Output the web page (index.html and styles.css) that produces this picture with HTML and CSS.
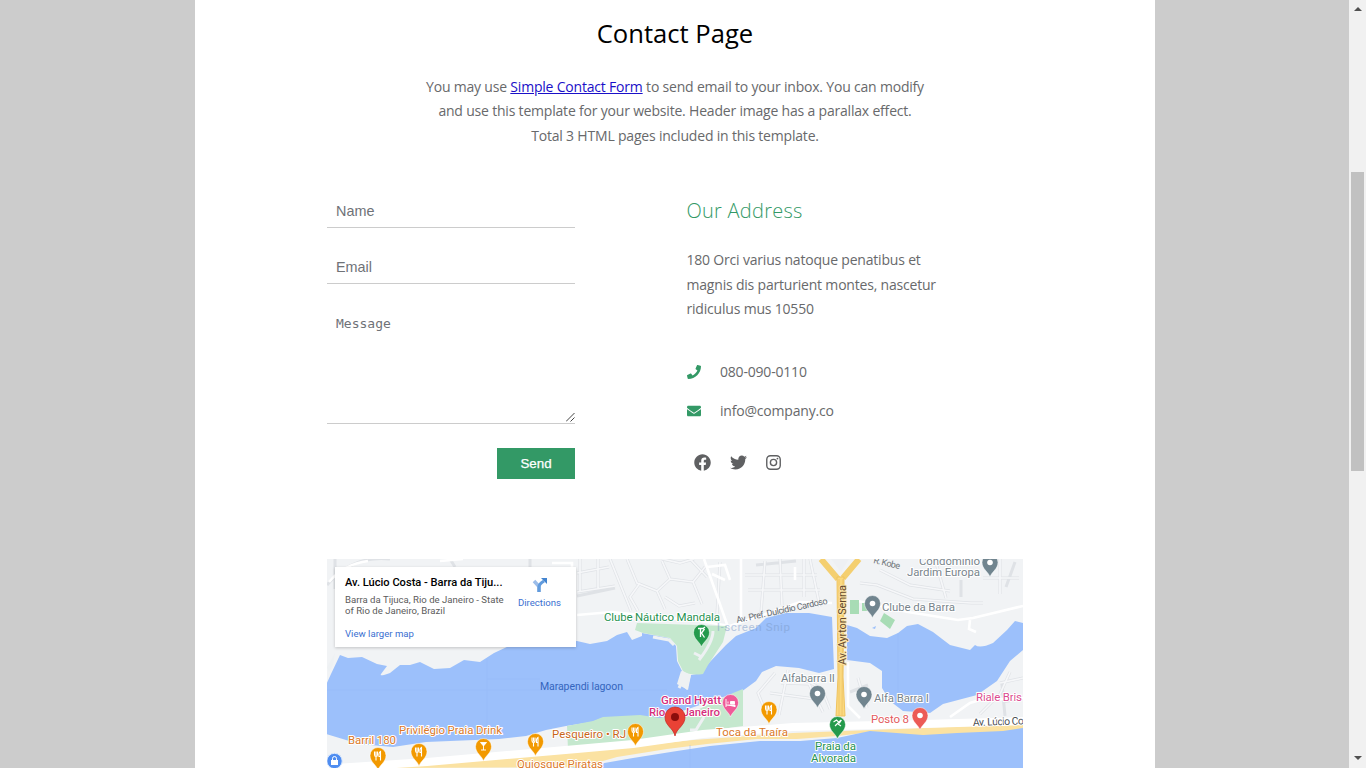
FILE: index.html
```html
<!DOCTYPE html>
<html lang="en">
<head>
<meta charset="utf-8">
<title>Contact Page</title>
<link rel="stylesheet" href="styles.css">
</head>
<body>
<div class="viewport">
<div class="canvas">
<main class="page">
  <header class="intro">
    <h1>Contact Page</h1>
    <p>You may use <a href="#">Simple Contact Form</a> to send email to your inbox. You can modify<br>and use this template for your website. Header image has a parallax effect.<br>Total 3 HTML pages included in this template.</p>
  </header>
  <div class="columns">
    <form class="form">
      <input type="text" placeholder="Name">
      <input type="email" placeholder="Email">
      <div class="message">
        <textarea placeholder="Message"></textarea>
        <svg class="grip" width="9" height="9" viewBox="0 0 9 9"><path d="M0 8.5 8.5 0M4.5 8.5l4-4" stroke="#444" fill="none"/></svg>
      </div>
      <button type="button">Send</button>
    </form>
    <section class="address">
      <h2>Our Address</h2>
      <p>180 Orci varius natoque penatibus et<br>magnis dis parturient montes, nascetur<br>ridiculus mus 10550</p>
      <div class="line"><svg width="14" height="14" viewBox="0 0 512 512"><path fill="#339966" d="M493.4 24.6l-104-24c-11.3-2.6-22.9 3.3-27.5 13.9l-48 112c-4.2 9.8-1.4 21.3 6.9 28l60.6 49.6c-36 76.7-98.9 140.5-177.2 177.2l-49.6-60.6c-6.8-8.3-18.2-11.1-28-6.9l-112 48C3.9 366.5-2 378.1.6 389.4l24 104C27.1 504.2 36.7 512 48 512c256.1 0 464-207.500 464-464 0-11.200-7.700-20.900-18.600-23.400z"/></svg><span>080-090-0110</span></div>
      <div class="line"><svg width="14" height="14" viewBox="0 0 512 512"><path fill="#339966" d="M502.300 190.800c3.900-3.100 9.700-.2 9.700 4.700V400c0 26.500-21.500 48-48 48H48c-26.500 0-48-21.500-48-48V195.600c0-5 5.700-7.800 9.700-4.700 22.400 17.400 52.100 39.500 154.100 113.600 21.100 15.400 56.700 47.800 92.200 47.600 35.700.3 72-32.800 92.300-47.600 102-74.100 131.600-96.300 154-113.700zM256 320c23.200.4 56.600-29.200 73.400-41.400 132.700-96.300 142.800-104.700 173.400-128.700 5.800-4.500 9.200-11.500 9.200-18.900v-19c0-26.500-21.500-48-48-48H48c-26.500 0-48 21.500-48 48v19c0 7.400 3.400 14.300 9.200 18.900 30.600 23.900 40.700 32.400 173.400 128.700 16.800 12.200 50.200 41.800 73.400 41.400z"/></svg><span>info@company.co</span></div>
      <div class="social">
        <svg width="17" height="17" viewBox="0 0 512 512"><path d="M504 256C504 119 393 8 256 8S8 119 8 256c0 123.800 90.700 226.400 209.300 245V327.700h-63V256h63v-54.600c0-62.200 37-96.500 93.700-96.500 27.100 0 55.500 4.800 55.500 4.800v61h-31.300c-30.800 0-40.400 19.100-40.400 38.700V256h68.800l-11 71.700h-57.800V501C413.300 482.400 504 379.800 504 256z"/></svg>
        <svg width="17" height="17" viewBox="0 0 512 512"><path d="M459.400 151.700c.3 4.500.3 9.100.3 13.600 0 138.700-105.600 298.600-298.600 298.600-59.500 0-114.700-17.200-161.100-47.100 8.400 1 16.600 1.300 25.300 1.300 49.100 0 94.200-16.600 130.300-44.800-46.100-1-84.800-31.200-98.100-72.800 6.500 1 13 1.600 19.800 1.600 9.400 0 18.800-1.300 27.600-3.600-48.100-9.700-84.100-52-84.100-103v-1.300c14 7.800 30.200 12.700 47.400 13.300-28.300-18.800-46.800-51-46.800-87.400 0-19.500 5.200-37.400 14.300-53 51.700 63.700 129.300 105.300 216.400 109.800-1.600-7.800-2.600-15.900-2.600-24 0-57.800 46.800-104.900 104.900-104.900 30.200 0 57.500 12.700 76.700 33.100 23.700-4.500 46.500-13.300 66.600-25.300-7.800 24.400-24.400 44.800-46.100 57.800 21.100-2.300 41.600-8.100 60.400-16.200-14.300 20.800-32.200 39.300-52.600 54.300z"/></svg>
        <svg width="17" height="17" viewBox="0 0 512 512"><g fill="none" stroke="#5f6062" stroke-width="42"><rect x="53" y="53" width="406" height="406" rx="112"/><circle cx="256" cy="256" r="94"/></g><circle cx="375" cy="137" r="27"/></svg>
      </div>
    </section>
  </div>
  <div class="map">
    <svg class="map-art" width="696" height="209" viewBox="327 559 696 209">
      <defs>
        <path id="pin" d="M0 0C-1.500-5-8-8-8-14.500a8 8 0 0 1 16 0C8-8 1.500-5 0 0z"/>
        <path id="fork" d="M-3.500-18.500v3q0 2 1.500 2v4M-.5-18.500v3q0 2-1.500 2M-2-18.500v4M2.500-9.500v-9q-2 1-1.500 5h1.500" fill="none" stroke="#fff" stroke-width="1.100"/>
      </defs>
      <rect x="327" y="559" width="696" height="209" fill="#f1f3f5"/>
      <g fill="none" stroke="#dfe2e6" stroke-width="3">
        <path d="M610 559l21 52M577 573l32-6M577 592l38-6M580 559v33M598 559v30M615 588l-38 8M627 559l10 24 20 8 13-12-8-18M657 591l8 18M670 579l23 3 9 22M662 559l18 4 14-4M693 582l12-15M640 583l-10 14 8 14M665 597l14 9 16-3M690 559l17 18M720 562l-3 52M765 561l-4 52M780 559l2 46M804 559v38M745 575h72M748 590h72M756 565l40-4M810 559l10 48M860 583l17 2 36 14 58 4h12M880 570l30 15 40 6M935 559l11 39M961 580v17M1000 559v35M983 578h36M1015 562l-9 25M800 677l22 12 8 20M775 673l-17 20 9 22M781 683l28 1 14 28M770 693l45 6M788 670l-9 45M858 678l9 30M850 692l18-7M1010 672l-10 22-20 20M1023 678l-23 5M1005 716l-3-32M1023 698l-20 4M327 585q25-30 63-26M335 559v30M450 559l5 8M530 559v8"/>
      </g>
      <g fill="none" stroke="#f6f7f9" stroke-width="1.700">
        <path d="M610 559l21 52M577 573l32-6M577 592l38-6M580 559v33M598 559v30M627 559l10 24 20 8 13-12-8-18M657 591l8 18M670 579l23 3 9 22M662 559l18 4 14-4M693 582l12-15M640 583l-10 14 8 14M665 597l14 9 16-3M690 559l17 18M720 562l-3 52M765 561l-4 52M780 559l2 46M804 559v38M745 575h72M748 590h72M810 559l10 48M860 583l17 2 36 14 58 4h12M880 570l30 15 40 6M935 559l11 39M1000 559v35M983 578h36M800 677l22 12 8 20M775 673l-17 20 9 22M781 683l28 1 14 28M770 693l45 6M788 670l-9 45M858 678l9 30M1010 672l-10 22-20 20M1023 678l-23 5"/>
      </g>
      <g fill="none" stroke="#fff" stroke-width="2.600">
        <path d="M704 559l24 68M577 615l35-3 88 9 30 5 70-24 32 1M741 559v60M707 567l18-2 5 15M712 574l13 6M858 601l50 11 50 8 15-2 50-12M970 620l-1 9 7 3M795 567v13M848 662v44l12 12M440 561l23-2M552 563h20v8M329 582q15-18 39-21M950 717l20-14 10-3 43-2"/>
      </g>
      <path fill="#9cc0fb" d="M340 655l8 3 14-1 15 7 10 2-6 8q-2 3 9-1l10-8 10 0 10-3 14 7 16-1 14-8 16 2 14-9 15-7 68-5 13 3 17-3 10-6 10-3 5 8 10-4v-3l27 5 7 8 1 15 5 10-3 12 8 7 4-15 11-2 5-8 19-20 10-9 20-8 10-10 20-5h23l23 4 2 52-15 4-20-5-23-2-14 6-6 9-15 11-9 2-73 25-20-3-37 2-10 4-26 4-20 4-20 6-27 3-73 3-33 5-34-3-13-4-20-6v-49l5-11z"/>
      <path fill="#9cc0fb" d="M847 625l10 3 13 8 17 2 11-5 9-7 11-2 15 8 17 13 20 5 5-5q5 4 18-2l14-13 8-9 8 2v27l-13 11-13 20-20 14-34 9-13 9-27-2-13-10-8-13v-17l-12-8-23-3z"/>
      <path fill="#c5e8ce" d="M637 623l90 3-4 16-15 23-5 9q-13 2-20-3l-5-10-1-15-7-8-27-5-8-3zM567 726l26-5 10-4 37-2 20 3 35-7 38-18 10-4v37l-175 24z"/>
      <path d="M653 637l16 3 5 5M679 688l6-12M713 631q0 11-14 29M694 653l8 4M690 730l6 0 8-13" fill="none" stroke="#eef1f3" stroke-width="3"/>
      <path d="M677 684l4-13 10 4-3 15zM327 667l4-7 4-7-2 12-4 7z" fill="#eef1f3"/>
      <g fill="#a8dcb5"><path d="M850 600h9v14h-9zM862 603h8v8h-8zM884 613l11 7-5 9-10-8z"/></g>
      <path d="M872 628l4-2-1 3z" fill="#9cc0fb"/>
      <path fill="#fbe2a2" d="M390 768l37-5 150-12 50-4 66-7 100-7 130-5 100-4v5l-10 4-46 3-44 1-50-5-36 4-40 3h-40l-50 5-40 5-50 8-35 10z"/>
      <path fill="#9cc0fb" d="M570 768l23-3 40-7 44-7 33-5 50-5h40l37-3 33-7 53 4 34-2 46-2 20-3v40z"/>
      <path d="M320 769l107-7 150-13 56-5 70-10 90-7 130-3 100-3" fill="none" stroke="#fff" stroke-width="8"/>
      <path d="M821 559l17 20M859 559l-16 19" fill="none" stroke="#f4cf70" stroke-width="6"/>
      <path d="M837 577h7l-1 100 2 39h-9l2-39z" fill="#fbd97f" stroke="#efc35e"/>
      <path d="M831 559h18l-8 13z" fill="#eef0f3"/><path d="M839 579v137M843 579l-1 137" stroke="#f0c76a" fill="none"/>
      <path d="M487 659v78M487 679h53M690 745v23M898 633v68M327 690h340" stroke="#94b9f4" stroke-width=".5"/>
      <g class="label" font-size="11.500">
        <text x="604" y="621" textLength="116" fill="#259150">Clube Náutico Mandala</text>
        <text x="661" y="704" textLength="60" class="hotel">Grand Hyatt</text>
        <text x="649" y="715.500" textLength="71" class="hotel">Rio de Janeiro</text>
        <text x="919" y="565" textLength="61" fill="#78848b">Condomínio</text>
        <text x="907" y="576" textLength="73" fill="#78848b">Jardim Europa</text>
        <text x="882" y="611" textLength="73" fill="#78848b">Clube da Barra</text>
        <text x="781" y="682" textLength="54" fill="#78848b">Alfabarra II</text>
        <text x="874" y="702" textLength="55" fill="#78848b">Alfa Barra I</text>
        <text x="871" y="723" textLength="38" fill="#e35b5d">Posto 8</text>
        <text x="976" y="701" textLength="46" fill="#dc4c90">Riale Bris</text>
        <text x="716" y="736" textLength="72" fill="#db7929">Toca da Traíra</text>
        <text x="552" y="738" textLength="74" fill="#c9661a">Pesqueiro • RJ</text>
        <text x="517" y="768" textLength="86" fill="#db7929">Quiosque Piratas</text>
        <text x="399" y="734" textLength="103" fill="#db7929">Privilégio Praia Drink</text>
        <text x="348" y="744" textLength="48" fill="#db7929">Barril 180</text>
        <text x="815" y="750" textLength="41" fill="#259150">Praia da</text>
        <text x="811" y="762" textLength="45" fill="#259150">Alvorada</text>
      </g>
      <g class="plain">
        <text x="540" y="690" textLength="83" font-size="10.500" fill="#3465bd">Marapendi lagoon</text>
        <text x="717" y="631" textLength="73" font-size="11.500" fill="#7a9ac8" opacity=".5">l-screen Snip</text>
        <text transform="translate(737 623) rotate(-12)" textLength="93" font-size="9" fill="#646a70">Av. Pref. Dulcídio Cardoso</text>
        <text transform="translate(873 563) rotate(13)" textLength="27" font-size="9" fill="#70767b">R. Kobe</text>
      </g>
      <g class="label">
        <text transform="translate(846 665) rotate(-90)" textLength="80" font-size="11" fill="#65492d" style="stroke:#fbe3a4">Av. Ayrton Senna</text>
        <text transform="rotate(-2 973 726)" x="973" y="726" textLength="56" font-size="10.500" fill="#4b4f54">Av. Lúcio Cos</text>
      </g>
      <g stroke="#fff" stroke-width=".5">
        <g fill="#f29900"><use href="#pin" x="378" y="770"/><use href="#pin" x="419" y="766"/><use href="#pin" x="483.500" y="761"/><use href="#pin" x="535.500" y="756"/><use href="#pin" x="635.500" y="746"/><use href="#pin" x="769" y="724"/></g>
        <g fill="#71858f"><use href="#pin" x="990" y="577"/><use href="#pin" x="872.500" y="618"/><use href="#pin" x="817.500" y="708"/><use href="#pin" x="864" y="709"/></g>
        <g fill="#249a4c"><use href="#pin" x="701.500" y="647"/><use href="#pin" x="837.500" y="739"/></g>
        <use href="#pin" x="730.500" y="717" fill="#ef5b98"/><use href="#pin" x="920" y="730" fill="#ec5b56"/>
      </g>
      <use href="#fork" x="378" y="770"/><use href="#fork" x="419" y="766"/><use href="#fork" x="535.500" y="756"/><use href="#fork" x="635.500" y="746"/><use href="#fork" x="769" y="724"/>
      <path d="M480.500 742.500h6l-3 3.500zM483.500 745v5M481 750h5" fill="#fff" stroke="#fff" stroke-width=".9"/>
      <path d="M726 699v8M726 705h9v2M730.500 701.500h4v2.500h-4zM728 701.500v2" fill="#fff" stroke="#fff" stroke-width=".9"/>
      <path d="M698 628.500h5l2-1.500M700.500 629v8M704.500 629l-3 4 3 4.500" fill="none" stroke="#fff" stroke-width="1.300"/>
      <path d="M833.500 722l3-2 3 3 2-3M835 726l6-6M838 724l3 2" fill="none" stroke="#fff" stroke-width="1.100"/>
      <g fill="#fff"><circle cx="990" cy="562.500" r="2.800"/><circle cx="872.500" cy="603.500" r="2.800"/><circle cx="817.500" cy="693.500" r="2.800"/><circle cx="864" cy="694.500" r="2.800"/><circle cx="920" cy="715.500" r="2.800"/></g>
      <path d="M675 736c-1.500-8-10-10-10-19a10 10 0 0 1 20 0c0 9-8.500 11-10 19z" fill="#e94235" stroke="#c5221f" stroke-width=".7"/><circle cx="675" cy="717" r="4" fill="#8b0e0c"/>
      <circle cx="334.500" cy="761" r="7.700" fill="#4f8df0" stroke="#dce9fd"/><path d="M331 760h7v5h-7z" fill="#fff"/><path d="M332.500 760v-1.500a2 2 0 0 1 4 0v1.500" fill="none" stroke="#fff"/>
    </svg>
    <div class="place">
      <div class="place-info">
        <strong>Av. Lúcio Costa - Barra da Tiju...</strong>
        <span>Barra da Tijuca, Rio de Janeiro - State<br>of Rio de Janeiro, Brazil</span>
        <a>View larger map</a>
      </div>
      <div class="directions">
        <svg width="16" height="16" viewBox="0 0 16 16"><path d="M7 15V9.500L2 4" fill="none" stroke="#9cbde9" stroke-width="3.500"/><path d="M7 15v-5q0-3 5-6" fill="none" stroke="#619bdd" stroke-width="3.200"/><path d="M9 1h6v6z" fill="#4384cf"/></svg>
        <a>Directions</a>
      </div>
    </div>
  </div>
</main>
</div>
<div class="scrollbar"><i class="arrow up"></i><i class="thumb"></i><i class="arrow down"></i></div>
</div>
</body>
</html>
```
FILE: styles.css
```css
* { box-sizing: border-box; }
body { margin: 0; overflow: hidden; font-family: "Open Sans", sans-serif; font-size: 14px; font-weight: 400; color: #68696b; }
.viewport { display: flex; height: 768px; overflow: hidden; }
.canvas { width: 1349px; background: #ccc; padding-left: 195px; }
.page { width: 960px; height: 768px; background: #fff; padding: 14px 132px 0; overflow: hidden; }
h1, h2, p { margin: 0; font-weight: 400; }
h1 { font-size: 25.600px; line-height: 39px; color: #000; text-align: center; }
.intro { height: 184px; }
.intro p { margin-top: 22px; line-height: 24.480px; text-align: center; white-space: nowrap; letter-spacing: -.195px; }
.intro a { color: #1a10c8; }
.columns { display: flex; height: 361px; }
.form { width: 248px; display: flex; flex-direction: column; margin-right: 111.500px; }
.form input { height: 31px; margin: 0 0 25px; padding: 0 9px 2px; border: 0; border-bottom: 1px solid #ccc; outline: 0; font: 14.400px "Liberation Sans", sans-serif; }
.form input:first-child { margin-top: -1px; }
.form ::placeholder { color: #6f7277; opacity: 1; }
.message { position: relative; height: 115px; }
.message textarea { display: block; width: 248px; height: 115px; padding: 7px 9px; border: 0; border-bottom: 1px solid #ccc; resize: none; font: 13px "DejaVu Sans Mono", monospace; }
.grip { position: absolute; right: 0; bottom: 2px; }
.form button { align-self: flex-end; width: 78px; height: 31px; margin-top: 24px; padding: 0; border: 0; background: #396; color: #fff; font: 13.330px "Liberation Sans", sans-serif; -webkit-text-stroke: .25px #fff; }
.address h2 { font-size: 20px; font-weight: 300; line-height: 27px; margin-top: -1px; letter-spacing: .25px; color: #396; }
.address p { line-height: 24.500px; margin: 24px 0 38px; white-space: nowrap; letter-spacing: -.195px; }
.line { display: flex; align-items: center; height: 24px; margin-bottom: 15px; letter-spacing: -.195px; }
.line span { margin-left: 19.500px; }
.social { display: flex; gap: 18.500px; padding: 16.500px 0 0 7.500px; fill: #5f6062; }
.map { position: relative; height: 209px; }
.map-art { display: block; font-family: Roboto, sans-serif; }
.label text { paint-order: stroke; stroke: #fff; stroke-width: 2px; stroke-linejoin: round; }
.label .hotel { fill: #d62f7d; font-weight: 500; }
.place { position: absolute; left: 8px; top: 8px; width: 241px; height: 80px; background: #fff; box-shadow: 0 1px 3px #0003; display: flex; font-family: Roboto, sans-serif; font-size: 9.600px; }
.place-info { width: 175px; padding: 9px 0 0 10px; display: flex; flex-direction: column; white-space: nowrap; }
.place strong { font-size: 11.100px; line-height: 14px; font-weight: 500; color: #000; }
.place span { margin-top: 4px; line-height: 11px; color: #5b5b5b; }
.place a { color: #3b6fd1; }
.place-info a { margin-top: 12px; line-height: 12px; }
.directions { width: 59px; padding-top: 10px; display: flex; flex-direction: column; align-items: center; }
.directions a { margin-top: 4px; line-height: 12px; }
.scrollbar { width: 17px; background: #f1f1f1; display: flex; flex-direction: column; align-items: center; }
.thumb { width: 13px; height: 299px; background: #c1c1c1; margin: 161px 0 285px; }
.arrow { border: 4px solid transparent; }
.up { border-top: 0; border-bottom-color: #505050; margin-top: 7px; }
.down { border-bottom: 0; border-top-color: #505050; }
```
